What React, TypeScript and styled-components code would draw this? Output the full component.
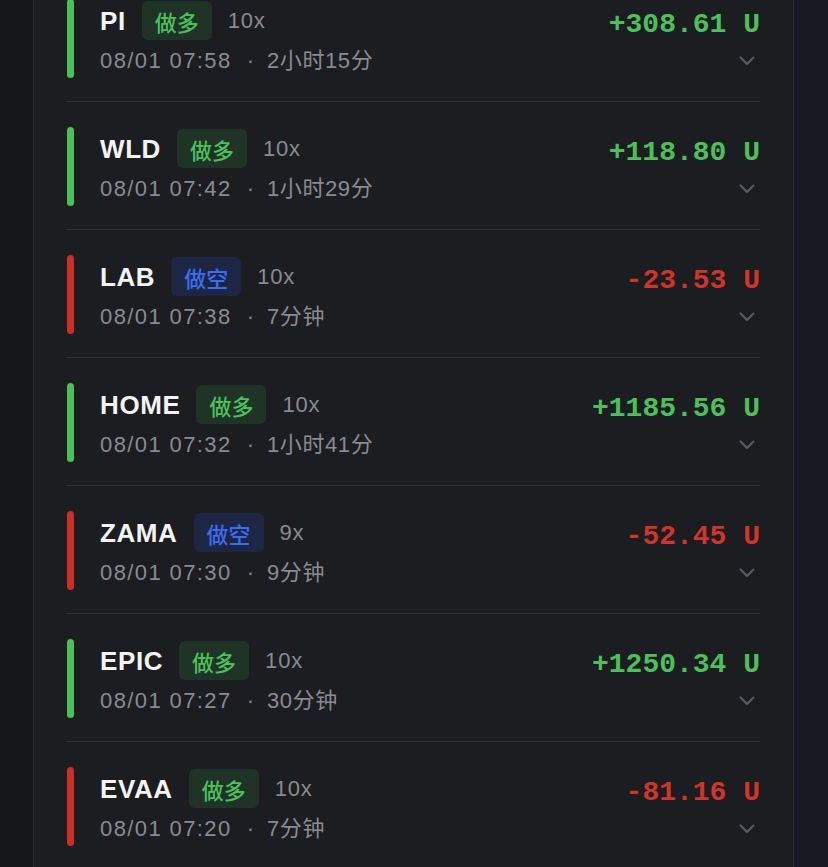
import React from "react";
import styled, { createGlobalStyle } from "styled-components";

const Global = createGlobalStyle`
  html, body { margin: 0; padding: 0; background: #17181c; }
  body { overflow: hidden; font-family: "Liberation Sans", "Noto Sans CJK SC", sans-serif; }
`;

const Page = styled.div`
  display: flex;
  min-height: 867px;
  background: linear-gradient(90deg, #16171b 0, #16171b 50%, #181922 50%, #181922 100%);
  padding: 0 34px 0 33px;
`;

const Panel = styled.div`
  flex: 1;
  background: #1c1d21;
  border-left: 1px solid #2b2c30;
  border-right: 1px solid #2b2c30;
  padding: 0 33px 0 33px;
  overflow: hidden;
`;

const List = styled.div`
  margin-top: -26px;
  display: flex;
  flex-direction: column;
`;

const Row = styled.div`
  display: flex;
  align-items: flex-start;
  padding: 25px 0 23px;
  border-bottom: 1px solid #303135;
`;

const Bar = styled.div<{ $up: boolean }>`
  width: 7px;
  height: 79px;
  border-radius: 4px;
  background: ${(p) => (p.$up ? "#4cc05b" : "#cc2f27")};
  flex: none;
`;

const Info = styled.div`
  display: flex;
  flex-direction: column;
  gap: 6px;
  margin-left: 26px;
  padding-top: 2px;
  flex: 1;
`;

const TopLine = styled.div`
  display: flex;
  align-items: center;
  height: 39px;
`;

const Symbol = styled.span`
  font-size: 26px;
  font-weight: 700;
  color: #f3f3f4;
  letter-spacing: 0.6px;
  margin-top: 1px;
`;

const Badge = styled.span<{ $long: boolean }>`
  margin-left: 16px;
  height: 39px;
  padding: 0 13px;
  display: inline-flex;
  align-items: center;
  border-radius: 6px;
  font-size: 22px;
  font-weight: 500;
  font-family: "Noto Sans CJK SC", sans-serif;
  color: ${(p) => (p.$long ? "#4cc05b" : "#3c6df0")};
  background: ${(p) => (p.$long ? "#1f3327" : "#1d2644")};
`;

const Lev = styled.span`
  margin-left: 16px;
  font-size: 22px;
  letter-spacing: 0.8px;
  color: #8a8b90;
`;

const SubLine = styled.div`
  display: flex;
  align-items: center;
  font-size: 22px;
  line-height: 30px;
  color: #8a8b90;
`;

const Time = styled.span`
  letter-spacing: 1.4px;
`;

const Dot = styled.span`
  margin: 0 13px 0 15px;
`;

const Dur = styled.span`
  letter-spacing: 0.6px;
`;

const Right = styled.div`
  display: flex;
  flex-direction: column;
  align-items: flex-end;
  padding-top: 8px;
`;

const Amount = styled.span<{ $up: boolean }>`
  font-family: "Liberation Mono", monospace;
  font-weight: 700;
  font-size: 28px;
  line-height: 36px;
  color: ${(p) => (p.$up ? "#4cc05b" : "#d0342a")};
`;

const Chevron = styled.svg`
  margin-top: 13px;
  margin-right: 5px;
  display: block;
`;

type Item = {
  sym: string;
  long: boolean;
  lev: string;
  time: string;
  dur: string;
  amt: string;
};

const items: Item[] = [
  { sym: "PI", long: true, lev: "10x", time: "08/01 07:58", dur: "2小时15分", amt: "+308.61 U" },
  { sym: "WLD", long: true, lev: "10x", time: "08/01 07:42", dur: "1小时29分", amt: "+118.80 U" },
  { sym: "LAB", long: false, lev: "10x", time: "08/01 07:38", dur: "7分钟", amt: "-23.53 U" },
  { sym: "HOME", long: true, lev: "10x", time: "08/01 07:32", dur: "1小时41分", amt: "+1185.56 U" },
  { sym: "ZAMA", long: false, lev: "9x", time: "08/01 07:30", dur: "9分钟", amt: "-52.45 U" },
  { sym: "EPIC", long: true, lev: "10x", time: "08/01 07:27", dur: "30分钟", amt: "+1250.34 U" },
  { sym: "EVAA", long: true, lev: "10x", time: "08/01 07:20", dur: "7分钟", amt: "-81.16 U" },
];

export default function App() {
  return (
    <>
      <Global />
      <Page>
        <Panel>
          <List>
            {items.map((it) => {
              const up = it.amt.startsWith("+");
              return (
                <Row key={it.sym}>
                  <Bar $up={up} />
                  <Info>
                    <TopLine>
                      <Symbol>{it.sym}</Symbol>
                      <Badge $long={it.long}>{it.long ? "做多" : "做空"}</Badge>
                      <Lev>{it.lev}</Lev>
                    </TopLine>
                    <SubLine>
                      <Time>{it.time}</Time>
                      <Dot>·</Dot>
                      <Dur>{it.dur}</Dur>
                    </SubLine>
                  </Info>
                  <Right>
                    <Amount $up={up}>{it.amt}</Amount>
                    <Chevron width="16" height="10" viewBox="0 0 16 10">
                      <path d="M1.5 1.5 L8 8 L14.5 1.5" fill="none" stroke="#5d5e63" strokeWidth="2" strokeLinecap="round" strokeLinejoin="round" />
                    </Chevron>
                  </Right>
                </Row>
              );
            })}
          </List>
        </Panel>
      </Page>
    </>
  );
}
